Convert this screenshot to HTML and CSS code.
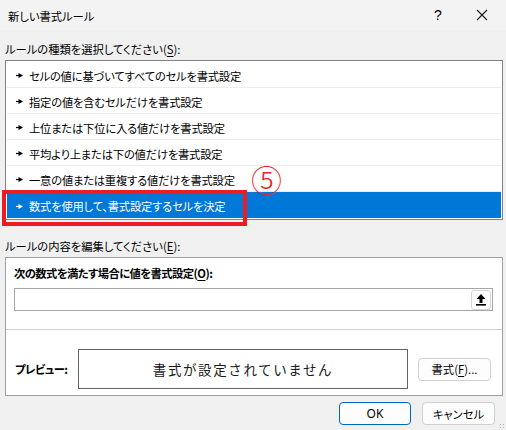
FILE: index.html
```html
<!DOCTYPE html>
<html lang="ja">
<head>
<meta charset="utf-8">
<title>新しい書式ルール</title>
<link rel="stylesheet" href="styles.css">
</head>
<body>
<div class="dialog">
  <div class="titlebar">
    <span class="title">新しい書式ルール</span>
    <span class="help">?</span>
    <span class="close"><svg width="12" height="12" viewBox="0 0 12 12"><path d="M1 1L11 11M11 1L1 11" stroke="#1a1a1a" stroke-width="1.1" fill="none"/></svg></span>
  </div>

  <div class="label">ルールの種類を選択してください(<u>S</u>):</div>
  <div class="list">
    <div class="row"><svg class="arrow" width="7" height="5" viewBox="0 0 7 5"><path d="M0 2.5H3" stroke="currentColor" stroke-width="1.2"/><path d="M2.5 0L7 2.5L2.5 5Z" fill="currentColor"/></svg>セルの値に基づいてすべてのセルを書式設定</div>
    <div class="row"><svg class="arrow" width="7" height="5" viewBox="0 0 7 5"><path d="M0 2.5H3" stroke="currentColor" stroke-width="1.2"/><path d="M2.5 0L7 2.5L2.5 5Z" fill="currentColor"/></svg>指定の値を含むセルだけを書式設定</div>
    <div class="row"><svg class="arrow" width="7" height="5" viewBox="0 0 7 5"><path d="M0 2.5H3" stroke="currentColor" stroke-width="1.2"/><path d="M2.5 0L7 2.5L2.5 5Z" fill="currentColor"/></svg>上位または下位に入る値だけを書式設定</div>
    <div class="row"><svg class="arrow" width="7" height="5" viewBox="0 0 7 5"><path d="M0 2.5H3" stroke="currentColor" stroke-width="1.2"/><path d="M2.5 0L7 2.5L2.5 5Z" fill="currentColor"/></svg>平均より上または下の値だけを書式設定</div>
    <div class="row"><svg class="arrow" width="7" height="5" viewBox="0 0 7 5"><path d="M0 2.5H3" stroke="currentColor" stroke-width="1.2"/><path d="M2.5 0L7 2.5L2.5 5Z" fill="currentColor"/></svg>一意の値または重複する値だけを書式設定</div>
    <div class="row selected"><svg class="arrow" width="7" height="5" viewBox="0 0 7 5"><path d="M0 2.5H3" stroke="currentColor" stroke-width="1.2"/><path d="M2.5 0L7 2.5L2.5 5Z" fill="currentColor"/></svg>数式を使用して、書式設定するセルを決定</div>
  </div>

  <div class="label label2">ルールの内容を編集してください(<u>E</u>):</div>
  <div class="panel">
    <div class="panel-top">
      <div class="bold-label">次の数式を満たす場合に値を書式設定(<u>O</u>):</div>
      <div class="input">
        <span class="ref-btn"><svg width="12" height="13" viewBox="0 0 12 13"><path d="M6 1L1.5 6H4.5V10H7.5V6H10.5Z" fill="#000"/><rect x="1" y="11" width="10" height="1.6" fill="#000"/></svg></span>
      </div>
    </div>
    <div class="panel-bottom">
      <span class="preview-label">プレビュー:</span>
      <div class="preview">書式が設定されていません</div>
      <span class="btn fmt-btn">書式(<u>F</u>)...</span>
    </div>
  </div>

  <div class="footer">
    <span class="btn ok">OK</span>
    <span class="btn">キャンセル</span>
  </div>

  <div class="highlight"></div>
  <div class="step">⑤</div>
  <div class="grip"></div>
</div>
</body>
</html>
```

FILE: styles.css
```css
html, body {
  margin: 0;
  padding: 0;
}
body {
  width: 506px;
  height: 430px;
  overflow: hidden;
  background: #f0f0f0;
  font-family: "Noto Sans CJK JP", "Noto Sans", sans-serif;
  font-size: 11.3px;
  color: #000;
  font-feature-settings: "palt";
}
.dialog {
  position: relative;
  width: 506px;
  height: 430px;
}
.titlebar {
  height: 30px;
  background: #f3f3f3;
  display: flex;
  align-items: center;
  padding-left: 8px;
}
.title {
  flex: 1;
  padding-top: 2px;
}
.help {
  width: 20px;
  font-family: "Liberation Sans", sans-serif;
  font-size: 14px;
  margin-right: 24px;
  text-align: center;
}
.close {
  width: 20px;
  margin-right: 14px;
  display: flex;
  justify-content: center;
}
.label {
  margin: 10px 0 0 5px;
  line-height: 18px;
  height: 18px;
}
.label2 {
  margin-top: 17px;
}
u {
  text-underline-offset: 2px;
}
.list {
  margin: 2px 3px 0 5px;
  border: 1px solid #828282;
  background: #fff;
  padding: 1px;
}
.row {
  height: 26px;
  box-sizing: border-box;
  border-bottom: 1px solid #ececec;
  display: flex;
  align-items: center;
  padding-left: 9px;
  padding-top: 2px;
  line-height: 18px;
  letter-spacing: -0.2px;
}
.row .arrow {
  margin-right: 6px;
  color: #000;
}
.row.selected {
  background: #0078d7;
  color: #fff;
  border-bottom: none;
}
.row.selected .arrow {
  color: #fff;
}
.panel {
  margin: 2px 3px 0 5px;
  border: 1px solid #a0a0a0;
  background: #fff;
}
.panel-top {
  padding: 6px 9px 18px 8px;
  border-bottom: 1px solid #cfcfcf;
}
.bold-label {
  font-weight: bold;
  line-height: 18px;
  letter-spacing: -0.55px;
}
.input {
  margin-top: 6px;
  height: 23px;
  box-sizing: border-box;
  border: 1px solid #a6a6a6;
  display: flex;
  justify-content: flex-end;
  align-items: center;
  padding-right: 1px;
}
.ref-btn {
  width: 20px;
  height: 20px;
  box-sizing: border-box;
  border: 1px solid #d6d6d6;
  border-radius: 3px;
  background: #fff;
  display: flex;
  align-items: center;
  justify-content: center;
}
.panel-bottom {
  display: flex;
  align-items: center;
  padding: 19px 10px 6px 9px;
}
.preview-label {
  width: 63px;
  font-weight: bold;
  letter-spacing: -0.5px;
}
.preview {
  width: 330px;
  height: 40px;
  box-sizing: border-box;
  border: 1px solid #646464;
  display: flex;
  align-items: center;
  justify-content: center;
  font-size: 13.5px;
  letter-spacing: 1.6px;
  font-feature-settings: normal;
  color: #1a1a1a;
}
.btn {
  width: 73px;
  height: 23px;
  box-sizing: border-box;
  border: 1px solid #d0d0d0;
  border-radius: 4px;
  background: #fdfdfd;
  display: flex;
  align-items: center;
  justify-content: center;
}
.fmt-btn {
  margin-left: 10px;
}
.footer {
  display: flex;
  justify-content: flex-end;
  gap: 11px;
  padding: 6px 11px 0 0;
}
.btn.ok {
  width: 72px;
  border: 1px solid #0067c0;
  font-family: "Noto Sans", sans-serif;
  font-size: 12px;
}
.highlight {
  position: absolute;
  left: 2px;
  top: 190px;
  width: 245px;
  height: 36px;
  box-sizing: border-box;
  border: 4px solid #ed1c24;
}
.step {
  position: absolute;
  left: 251px;
  top: 159px;
  font-size: 31px;
  line-height: 40px;
  color: #ed1c24;
  font-feature-settings: normal;
  font-weight: 300;
}
.grip {
  position: absolute;
  right: 0;
  bottom: 0;
  width: 7px;
  height: 7px;
  background-image: radial-gradient(circle, #b0b0b0 0.8px, transparent 1px);
  background-size: 3px 3px;
}
```
